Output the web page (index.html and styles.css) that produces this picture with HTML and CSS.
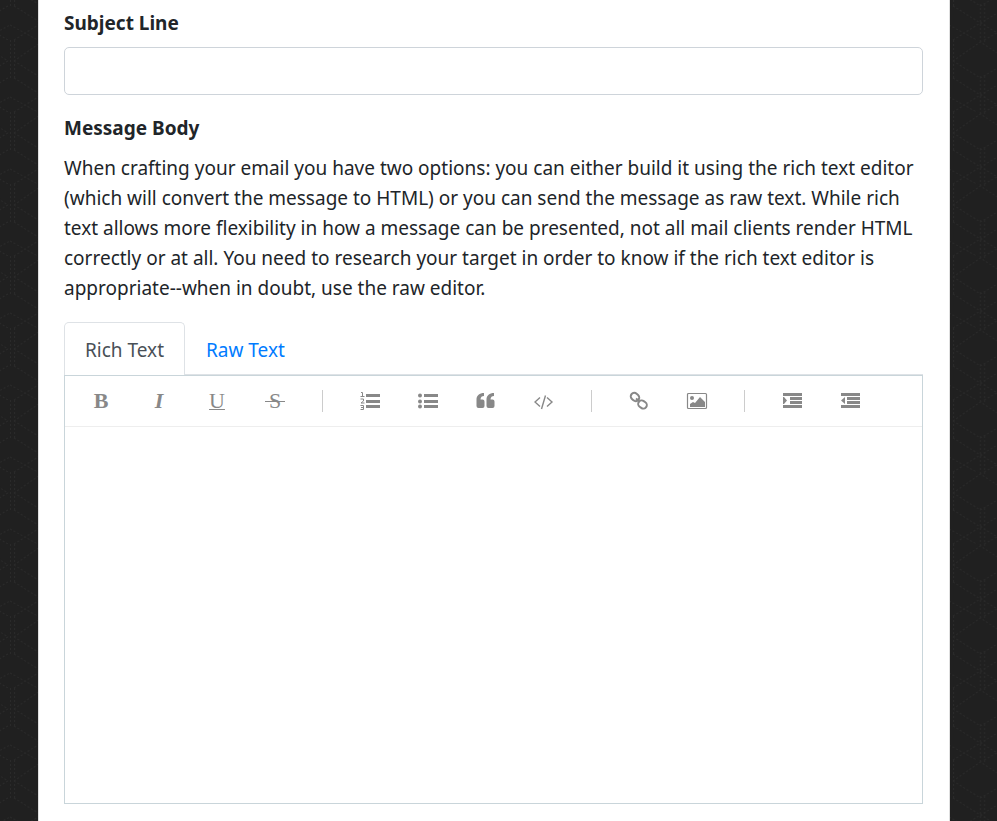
FILE: index.html
```html
<!DOCTYPE html>
<html lang="en">
<head>
<meta charset="utf-8">
<meta name="viewport" content="width=device-width, initial-scale=1">
<title>Compose Message</title>
<link rel="stylesheet" href="styles.css">
</head>
<body>
<svg class="backdrop" aria-hidden="true">
  <defs>
    <pattern id="cubes" width="62.6" height="72" patternUnits="userSpaceOnUse" patternTransform="translate(10 40)">
      <g fill="none" stroke="#2a2a2a" stroke-width="1" stroke-dasharray="2 2">
        <path d="M.5 0V38M4.500 0V38M31.500 36V72M35.500 36V72M31.500 0V2M35.500 0V2"/>
        <path d="M4 0L31.300-17M4 72L31.300 55L60.600 72M4 38L31.300 55L60.600 38M4 21L31.300 2L60.600 21M4 21L31.300 38L60.600 21M0 57L31.300 74L62.600 57"/>
      </g>
    </pattern>
  </defs>
  <rect width="100%" height="100%" fill="url(#cubes)"/>
</svg>
<main class="card">
  <form>
    <div class="field">
      <label class="label" for="subject">Subject Line</label>
      <input class="input" id="subject" type="text">
    </div>
    <div class="label" id="body-label">Message Body</div>
    <p class="help">When crafting your email you have two options: you can either build it using the rich text editor (which will convert the message to HTML) or you can send the message as raw text. While rich text allows more flexibility in how a message can be presented, not all mail clients render HTML correctly or at all. You need to research your target in order to know if the rich text editor is appropriate--when in doubt, use the raw editor.</p>
    <nav class="tabs">
      <a class="tab active" href="#rich">Rich Text</a>
      <a class="tab" href="#raw">Raw Text</a>
    </nav>
    <div class="editor" id="rich">
      <div class="toolbar" role="toolbar" aria-label="Formatting">
        <button class="tool bold" type="button" aria-label="Bold">B</button>
        <button class="tool italic" type="button" aria-label="Italic">I</button>
        <button class="tool underline" type="button" aria-label="Underline">U</button>
        <button class="tool" type="button" aria-label="Strikethrough"><span class="strike">S</span></button>
        <span class="divider"></span>
        <button class="tool" type="button" aria-label="Numbered list">
          <svg width="20" height="20" viewBox="0 0 20 20"><path fill="currentColor" d="M6 3h14v3H6zM6 9h14v3H6zM6 14h14v3H6z"/><path fill="none" stroke="currentColor" d="M1 1.500H2.500V5.500M.5 5.500H4.500M.5 8H3.500V10L1 12H4.500M.5 14.500H3.500V18.500H.5M1 16.500H3.500"/></svg>
        </button>
        <button class="tool" type="button" aria-label="Bulleted list">
          <svg width="20" height="20" viewBox="0 0 20 20"><path fill="currentColor" d="M6 3h14v3H6zM6 9h14v3H6zM6 14h14v3H6z"/><g fill="currentColor"><circle cx="2" cy="4.500" r="2"/><circle cx="2" cy="10.500" r="2"/><circle cx="2" cy="15.500" r="2"/></g></svg>
        </button>
        <button class="tool" type="button" aria-label="Quote">
          <svg width="20" height="20" viewBox="0 0 20 20"><path id="quote" fill="currentColor" d="M8 2v3C6 5 4.500 6 4.500 8.500H6.500Q8.500 8.500 8.500 10.500V15Q8.500 17 6.500 17H2.500Q.5 17 .5 15V8.500C.5 4.500 3.500 2 8 2z"/><use href="#quote" x="10"/></svg>
        </button>
        <button class="tool" type="button" aria-label="Code">
          <svg width="20" height="20" viewBox="0 0 20 20"><path fill="none" stroke="currentColor" stroke-width="1.400" d="M6 6.500L1 11l5 4.500M13 6.500l5 4.500-5 4.500M11.500 4.500L7.500 18"/></svg>
        </button>
        <span class="divider"></span>
        <button class="tool" type="button" aria-label="Link">
          <svg width="20" height="20" viewBox="0 0 20 20"><g fill="none" stroke="currentColor" stroke-width="2"><rect x="1.500" y="2.500" width="9" height="7" rx="3.500" transform="rotate(42 6 6)"/><rect x="9" y="10" width="9" height="7" rx="3.500" transform="rotate(36 13.500 13.500)"/><path d="M7 7.500L9.500 9.500"/></g></svg>
        </button>
        <button class="tool" type="button" aria-label="Image">
          <svg width="22" height="20" viewBox="0 0 22 20"><rect x="1.500" y="2.500" width="19" height="15" rx="1" fill="none" stroke="currentColor" stroke-width="1.200"/><circle cx="6" cy="7" r="2" fill="currentColor"/><path fill="currentColor" d="M4 16v-3l3-2 2 1 5-6 5 5v5z"/></svg>
        </button>
        <span class="divider"></span>
        <button class="tool" type="button" aria-label="Increase indent">
          <svg width="20" height="20" viewBox="0 0 20 20"><path fill="currentColor" d="M1 2h19v3H1zM8 6h12v3H8zM8 10h12v3H8zM1 14h19v3H1zM1 6h1l3 3.500L2 13H1z"/></svg>
        </button>
        <button class="tool" type="button" aria-label="Decrease indent">
          <svg width="20" height="20" viewBox="0 0 20 20"><path fill="currentColor" d="M1 2h19v3H1zM7 6h13v3H7zM7 10h13v3H7zM1 14h19v3H1zM5 6v7L1 9.500z"/></svg>
        </button>
      </div>
      <div class="content" contenteditable="true" role="textbox" aria-multiline="true" aria-labelledby="body-label"></div>
    </div>
  </form>
</main>
</body>
</html>
```

FILE: styles.css
```css
* {
  box-sizing: border-box;
}

body {
  margin: 0;
  background: #202020;
  color: #212529;
  font: 19px/30px "Segoe UI", "Noto Sans", sans-serif;
}

.backdrop {
  position: fixed;
  inset: 0;
  width: 100%;
  height: 100%;
  z-index: -1;
}

.card {
  min-height: 100vh;
  margin: 0 47px 0 38px;
  padding: 8px 26px 17px 25px;
  background: #fff;
  border: solid #dfdfdf;
  border-width: 0 1px;
}

.field {
  margin-bottom: 18px;
}

.label {
  display: block;
  margin-bottom: 9px;
  font-weight: 700;
}

.input {
  display: block;
  width: 100%;
  height: 48px;
  padding: 8px 15px;
  border: 1px solid #ced4da;
  border-radius: 5px;
  background: #fff;
  color: #495057;
  font: inherit;
}

.help {
  margin: 10px 0 19px;
}

.tabs {
  display: flex;
  border-bottom: 1px solid #dee2e6;
}

.tab {
  padding: 12px 20px 9px;
  border: 1px solid transparent;
  border-bottom: 0;
  border-radius: 5px 5px 0 0;
  color: #007bff;
  text-decoration: none;
}

.tab.active {
  margin-bottom: -1px;
  padding-bottom: 10px;
  border-color: #dee2e6;
  background: #fff;
  color: #495057;
}

.editor {
  border: 1px solid #c9d5da;
}

.toolbar {
  display: flex;
  align-items: center;
  height: 51px;
  padding: 0 7px;
  border-bottom: 1px solid #eee;
}

.tool {
  display: flex;
  align-items: center;
  justify-content: center;
  width: 58px;
  height: 50px;
  padding: 0;
  border: 0;
  background: none;
  color: #888;
  font: 22px/50px "Liberation Serif", serif;
}

.bold {
  font-weight: bold;
}

.italic {
  font-style: italic;
  font-weight: bold;
}

.underline {
  text-decoration: underline;
  text-decoration-thickness: 1px;
}

.strike {
  padding: 0 4px;
  background: linear-gradient(#888, #888) center / 100% 1px no-repeat;
}

.divider {
  width: 1px;
  height: 22px;
  margin: 0 18px;
  background: #ccc;
}

.content {
  min-height: 376px;
  padding: 12px 15px;
  outline: 0;
}
```
